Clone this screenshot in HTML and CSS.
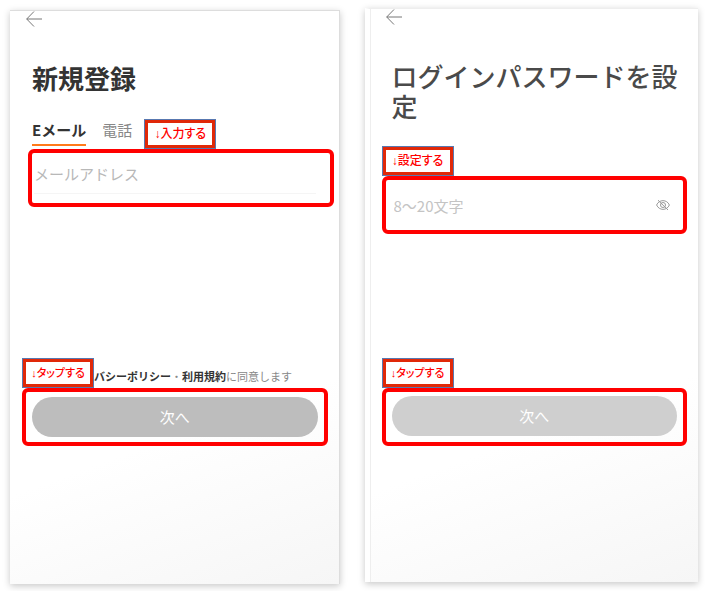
FILE: index.html
```html
<!DOCTYPE html>
<html lang="ja">
<head>
    <meta charset="UTF-8">
    <meta name="viewport" content="width=device-width, initial-scale=1.0">
    <title>新規登録</title>
    <link rel="stylesheet" href="styles.css">
</head>
<body>
    <main class="screens">
        <section class="screen signup">
            <button class="back" type="button" aria-label="戻る">
                <svg viewBox="0 0 16 16" width="16" height="16"><path d="M8 0.5L0.7 8L8 15.5M0.7 8H16"/></svg>
            </button>
            <h1>新規登録</h1>
            <div class="tabs">
                <button class="tab active" type="button">Eメール</button>
                <button class="tab" type="button">電話</button>
                <span class="note">↓入力する</span>
            </div>
            <div class="frame field">
                <input type="email" placeholder="メールアドレス" aria-label="メールアドレス">
            </div>
            <div class="hint">
                <span class="note tap">↓タップする</span>
                <p><a href="#">バシーポリシー</a>・<a href="#">利用規約</a>に同意します</p>
            </div>
            <div class="frame action">
                <button class="next" type="button">次へ</button>
            </div>
        </section>

        <section class="screen password">
            <button class="back" type="button" aria-label="戻る">
                <svg viewBox="0 0 16 16" width="16" height="16"><path d="M8 0.5L0.7 8L8 15.5M0.7 8H16"/></svg>
            </button>
            <h1>ログインパスワードを設定</h1>
            <div class="hint">
                <span class="note">↓設定する</span>
            </div>
            <div class="frame field">
                <input type="password" placeholder="8〜20文字" aria-label="パスワード">
                <button class="eye" type="button" aria-label="パスワードを表示">
                    <svg viewBox="0 0 14 12" width="14" height="12">
                        <path d="M0.6 6C3 0.2 11 0.2 13.4 6C11 11.8 3 11.8 0.6 6Z"/>
                        <circle cx="7" cy="6" r="2.5"/>
                        <path d="M2 1.2L12 11"/>
                    </svg>
                </button>
            </div>
            <div class="hint">
                <span class="note tap">↓タップする</span>
            </div>
            <div class="frame action">
                <button class="next" type="button">次へ</button>
            </div>
        </section>
    </main>
</body>
</html>
```

FILE: styles.css
```css
* {
    box-sizing: border-box;
}
body {
    margin: 0;
    background: #fff;
    color: #333;
    font-family: "Noto Sans CJK JP", sans-serif;
}
button {
    padding: 0;
    border: none;
    background: none;
    font-family: inherit;
}
.screens {
    display: flex;
    align-items: flex-start;
    gap: 25px;
    padding: 8px 7px 7px 10px;
}
.screen {
    flex: 1;
    display: flex;
    flex-direction: column;
    padding: 0 11px 138px 12px;
    background: linear-gradient(160deg, #fff 70%, #f6f6f6);
    border-top: 1px solid #ddd;
    box-shadow: 0 2px 7px rgba(0, 0, 0, 0.22);
}
.signup {
    margin-top: 2px;
    border-right: 1px solid #ddd;
}
.password {
    padding-bottom: 136px;
    border-left: 5px solid #fff;
    border-top-color: #eee;
    box-shadow: inset 1px 0 #eee, 0 2px 7px rgba(0, 0, 0, 0.22);
}
.back {
    width: 16px;
    height: 16px;
    margin-left: 4px;
}
.back svg,
.eye svg {
    display: block;
    fill: none;
    stroke: #777;
}
h1 {
    margin: 36px 0 0 10px;
    font-size: 26px;
    font-weight: 500;
    line-height: 30px;
}
.signup h1 {
    font-weight: 700;
}
.tabs {
    display: flex;
    align-items: flex-start;
    gap: 16px;
    margin: 26px 0 0 10px;
}
.tab {
    height: 27px;
    padding-bottom: 6px;
    font-size: 15px;
    line-height: 20px;
    color: #888;
}
.tab.active {
    padding-bottom: 4px;
    border-bottom: 2px solid #ff7a1a;
    font-weight: 700;
    color: #333;
}
.note {
    flex: none;
    width: 72px;
    height: 30px;
    border: 4px solid #e02808;
    outline: 1px solid #5878b0;
    outline-offset: -1px;
    background: #fff;
    color: #f00;
    font-family: "Liberation Sans", "Noto Sans CJK JP", sans-serif;
    font-size: 12px;
    font-weight: 500;
    font-feature-settings: "palt";
    line-height: 22px;
    text-align: center;
}
.note.tap {
    font-size: 11px;
}
.tabs .note {
    margin-left: -4px;
}
.frame {
    border: 4px solid #f00;
    border-radius: 6px;
    height: 58px;
}
.field {
    display: flex;
    align-items: center;
    padding: 0 8px;
}
.signup .field {
    margin: 0 -6px 0 6px;
    padding: 0 14px 8px 2px;
}
input {
    flex: 1;
    min-width: 0;
    height: 40px;
    padding: 0;
    border: none;
    border-bottom: 1px solid #f5f5f5;
    outline: none;
    background: none;
    font-family: inherit;
    font-size: 15px;
}
input::placeholder {
    color: #b8b8b8;
    opacity: 1;
}
.password input {
    border-bottom: none;
}
.password input::placeholder {
    color: #c4c4c4;
}
.eye {
    margin-right: 5px;
}
.eye svg {
    stroke: #999;
}
.hint {
    display: flex;
    align-items: center;
}
.hint p {
    margin: 6px 0 0;
    font-size: 11px;
    line-height: 16px;
    color: #888;
    white-space: nowrap;
}
.hint a {
    color: #333;
    font-weight: 700;
    text-decoration: none;
}
.signup .field + .hint {
    margin-top: 151px;
}
.password h1 {
    color: #4a4a4a;
}
.password h1 + .hint {
    margin-top: 25px;
}
.password .field + .hint {
    margin-top: 124px;
}
.action {
    padding: 5px 6px;
}
.password .action {
    padding-top: 4px;
}
.next {
    display: block;
    width: 100%;
    height: 40px;
    border-radius: 20px;
    background: #bdbdbd;
    color: #fff;
    font-size: 15px;
    line-height: 40px;
}
.password .next {
    background: #cfcfcf;
}
```
